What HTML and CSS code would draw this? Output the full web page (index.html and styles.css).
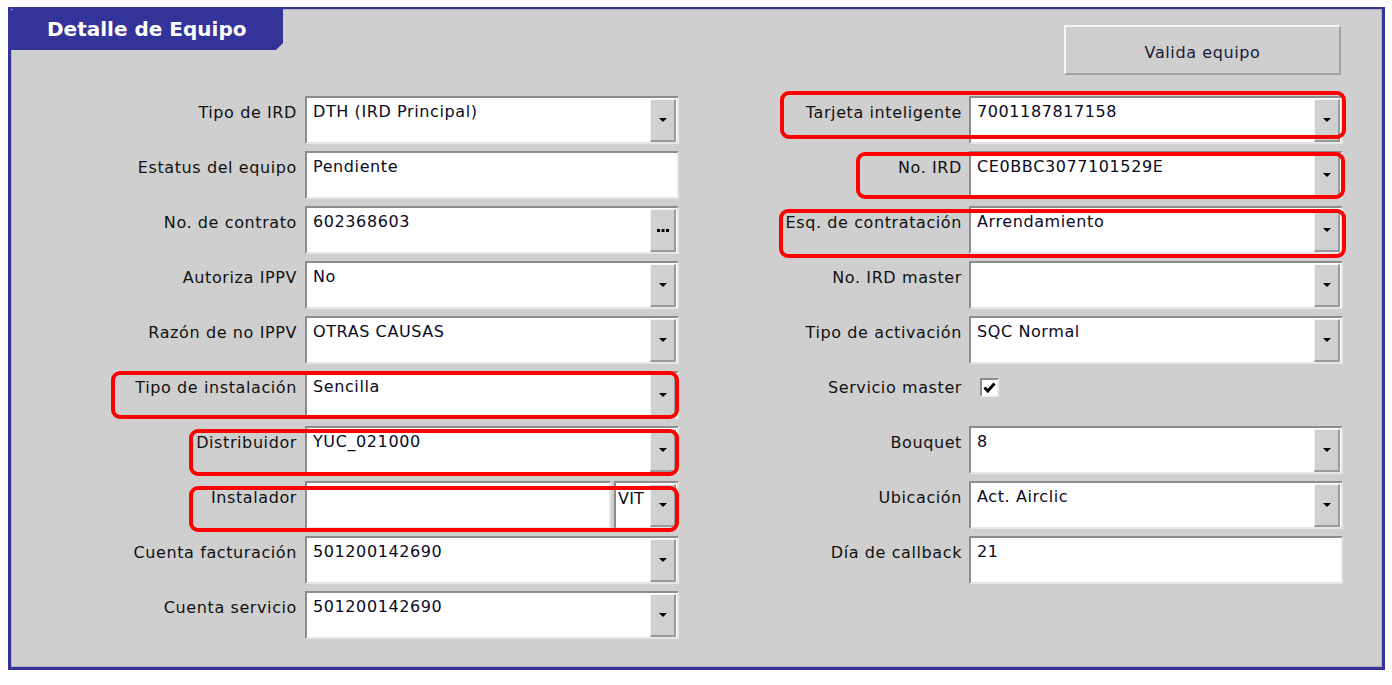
FILE: index.html
```html
<!DOCTYPE html>
<html lang="es">
<head>
<meta charset="utf-8">
<title>Detalle de Equipo</title>
<link rel="stylesheet" href="styles.css">
</head>
<body>
<div class="panel">
  <div class="header">
    <div class="tab">Detalle de Equipo</div>
    <div class="btn">Valida equipo</div>
  </div>
  <div class="form">
    <div class="lbl">Tipo de IRD</div>
    <div class="field"><span class="val">DTH (IRD Principal)</span><span class="dd"><svg width="8" height="4" viewBox="0 0 8 4"><polygon points="0,0 8,0 4,4" fill="#000"/></svg></span></div>
    <div class="lbl lbl-r">Tarjeta inteligente</div>
    <div class="field"><span class="val">7001187817158</span><span class="dd"><svg width="8" height="4" viewBox="0 0 8 4"><polygon points="0,0 8,0 4,4" fill="#000"/></svg></span></div>

    <div class="lbl">Estatus del equipo</div>
    <div class="field"><span class="val">Pendiente</span></div>
    <div class="lbl lbl-r">No. IRD</div>
    <div class="field"><span class="val">CE0BBC3077101529E</span><span class="dd"><svg width="8" height="4" viewBox="0 0 8 4"><polygon points="0,0 8,0 4,4" fill="#000"/></svg></span></div>

    <div class="lbl">No. de contrato</div>
    <div class="field"><span class="val">602368603</span><span class="dd"><svg width="12" height="3" viewBox="0 0 12 3"><rect x="0" y="0" width="3" height="3" fill="#000"/><rect x="4.5" y="0" width="3" height="3" fill="#000"/><rect x="9" y="0" width="3" height="3" fill="#000"/></svg></span></div>
    <div class="lbl lbl-r">Esq. de contratación</div>
    <div class="field"><span class="val">Arrendamiento</span><span class="dd"><svg width="8" height="4" viewBox="0 0 8 4"><polygon points="0,0 8,0 4,4" fill="#000"/></svg></span></div>

    <div class="lbl">Autoriza IPPV</div>
    <div class="field"><span class="val">No</span><span class="dd"><svg width="8" height="4" viewBox="0 0 8 4"><polygon points="0,0 8,0 4,4" fill="#000"/></svg></span></div>
    <div class="lbl lbl-r">No. IRD master</div>
    <div class="field"><span class="val"></span><span class="dd"><svg width="8" height="4" viewBox="0 0 8 4"><polygon points="0,0 8,0 4,4" fill="#000"/></svg></span></div>

    <div class="lbl">Razón de no IPPV</div>
    <div class="field"><span class="val">OTRAS CAUSAS</span><span class="dd"><svg width="8" height="4" viewBox="0 0 8 4"><polygon points="0,0 8,0 4,4" fill="#000"/></svg></span></div>
    <div class="lbl lbl-r">Tipo de activación</div>
    <div class="field"><span class="val">SQC Normal</span><span class="dd"><svg width="8" height="4" viewBox="0 0 8 4"><polygon points="0,0 8,0 4,4" fill="#000"/></svg></span></div>

    <div class="lbl">Tipo de instalación</div>
    <div class="field"><span class="val">Sencilla</span><span class="dd"><svg width="8" height="4" viewBox="0 0 8 4"><polygon points="0,0 8,0 4,4" fill="#000"/></svg></span></div>
    <div class="lbl lbl-r">Servicio master</div>
    <div class="chk-cell"><span class="chk"><svg width="13" height="11" viewBox="0 0 13 11"><path d="M1.5 5.5 L4.8 9 L11.5 1.5" fill="none" stroke="#000" stroke-width="3"/></svg></span></div>

    <div class="lbl">Distribuidor</div>
    <div class="field"><span class="val">YUC_021000</span><span class="dd"><svg width="8" height="4" viewBox="0 0 8 4"><polygon points="0,0 8,0 4,4" fill="#000"/></svg></span></div>
    <div class="lbl lbl-r">Bouquet</div>
    <div class="field"><span class="val">8</span><span class="dd"><svg width="8" height="4" viewBox="0 0 8 4"><polygon points="0,0 8,0 4,4" fill="#000"/></svg></span></div>

    <div class="lbl">Instalador</div>
    <div class="split">
      <div class="field field-main"><span class="val"></span></div>
      <div class="field field-code"><span class="val val-code">VIT</span><span class="dd"><svg width="8" height="4" viewBox="0 0 8 4"><polygon points="0,0 8,0 4,4" fill="#000"/></svg></span></div>
    </div>
    <div class="lbl lbl-r">Ubicación</div>
    <div class="field"><span class="val">Act. Airclic</span><span class="dd"><svg width="8" height="4" viewBox="0 0 8 4"><polygon points="0,0 8,0 4,4" fill="#000"/></svg></span></div>

    <div class="lbl">Cuenta facturación</div>
    <div class="field"><span class="val">501200142690</span><span class="dd"><svg width="8" height="4" viewBox="0 0 8 4"><polygon points="0,0 8,0 4,4" fill="#000"/></svg></span></div>
    <div class="lbl lbl-r">Día de callback</div>
    <div class="field"><span class="val">21</span></div>

    <div class="lbl">Cuenta servicio</div>
    <div class="field"><span class="val">501200142690</span><span class="dd"><svg width="8" height="4" viewBox="0 0 8 4"><polygon points="0,0 8,0 4,4" fill="#000"/></svg></span></div>
    <div></div>
    <div></div>

    <div class="hl hl-tarjeta"></div>
    <div class="hl hl-ird"></div>
    <div class="hl hl-esq"></div>
    <div class="hl hl-inst"></div>
    <div class="hl hl-dist"></div>
    <div class="hl hl-instalador"></div>
  </div>
</div>
</body>
</html>
```
FILE: styles.css
```css
html, body {
  margin: 0;
  background: #ffffff;
}
body {
  padding: 7px 7px 0 8px;
  font-family: "DejaVu Sans", Verdana, sans-serif;
  font-size: 16px;
  color: #111;
}
.panel {
  background: #cfcfcf;
  border: 3px solid #333399;
  border-top-width: 2px;
  box-shadow: inset 0 0 0 1px #b4b4b4;
  padding-bottom: 28px;
}
.header {
  display: flex;
  justify-content: space-between;
  align-items: flex-start;
  height: 87px;
}
.tab {
  margin: -2px 0 0 -3px;
  width: 275px;
  height: 43px;
  box-sizing: border-box;
  background: #333399;
  color: #fff;
  font-weight: bold;
  font-size: 20px;
  display: flex;
  align-items: center;
  padding: 0 0 0 39px;
  clip-path: polygon(7px 0, 100% 0, 100% calc(100% - 7px), calc(100% - 7px) 100%, 0 100%, 0 7px);
}
.btn {
  margin: 16px 41px 0 0;
  width: 277px;
  height: 50px;
  box-sizing: border-box;
  border-style: solid;
  border-width: 2px;
  border-color: #f6f6f6 #a2a2a2 #a2a2a2 #f6f6f6;
  display: flex;
  align-items: center;
  justify-content: center;
  letter-spacing: 0.6px;
  color: #1a1a3a;
  padding: 4px 0 0 0;
}
.form {
  position: relative;
  display: grid;
  grid-template-columns: 294px 374px 290px 374px;
  grid-auto-rows: 48px;
  row-gap: 7px;
}
.lbl {
  text-align: right;
  padding: 7px 8px 0 0;
  letter-spacing: 0.6px;
  white-space: nowrap;
}
.lbl-r {
  padding-right: 7px;
}
.field {
  display: flex;
  box-sizing: border-box;
  height: 48px;
  background: #fff;
  border-style: solid;
  border-width: 2px;
  border-color: #8c8c8c #e6e6e6 #e6e6e6 #8c8c8c;
}
.val {
  flex: 1;
  padding: 4px 0 0 6px;
  letter-spacing: 0.6px;
  color: #0a0a1e;
  white-space: nowrap;
  overflow: hidden;
}
.dd {
  width: 26px;
  margin: 1px 1px 0 0;
  box-sizing: border-box;
  background: #d0d0d0;
  border-style: solid;
  border-width: 1px 2px 2px 1px;
  border-color: #f4f4f4 #9a9a9a #9a9a9a #f4f4f4;
  display: flex;
  align-items: center;
  justify-content: center;
}
.split {
  display: flex;
  gap: 3px;
}
.field-main {
  width: 306px;
}
.field-code {
  flex: 1;
}
.val-code {
  padding: 6px 0 0 2px;
  letter-spacing: 0.2px;
}
.chk-cell {
  padding: 7px 0 0 11px;
}
.chk {
  display: flex;
  align-items: center;
  justify-content: center;
  width: 19px;
  height: 19px;
  box-sizing: border-box;
  background: #fff;
  border-style: solid;
  border-width: 2px;
  border-color: #8c8c8c #eeeeee #eeeeee #8c8c8c;
}
.hl {
  position: absolute;
  box-sizing: border-box;
  border: 4px solid #ff0000;
  border-radius: 9px;
  pointer-events: none;
}
.hl-tarjeta { left: 769px; top: -5px; width: 566px; height: 48px; }
.hl-ird { left: 845px; top: 56px; width: 489px; height: 47px; }
.hl-esq { left: 768px; top: 113px; width: 567px; height: 49px; }
.hl-inst { left: 100px; top: 275px; width: 568px; height: 48px; }
.hl-dist { left: 178px; top: 333px; width: 490px; height: 47px; }
.hl-instalador { left: 178px; top: 390px; width: 490px; height: 46px; }
```
